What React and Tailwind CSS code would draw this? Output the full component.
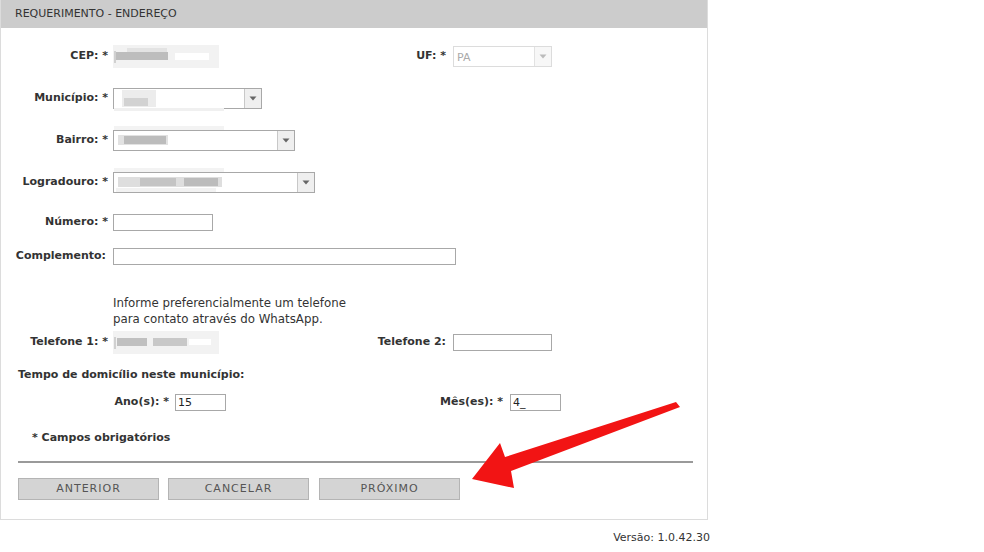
import React from "react";

const font = { fontFamily: '"DejaVu Sans", Verdana, sans-serif' };

// pixelated blur used where the original screenshot hides personal data
const Mosaic = ({ blocks }) => (
  <div className="relative w-full h-full">
    {blocks.map((b, i) => (
      <div
        key={i}
        className="absolute"
        style={{ left: b[0], top: b[1], width: b[2], height: b[3], background: b[4] }}
      />
    ))}
  </div>
);

const Caret = ({ light }) => (
  <svg width="8" height="5" viewBox="0 0 8 5">
    <path d="M0.5 0.5 L7.5 0.5 L4 4.5 Z" fill={light ? "#bbb" : "#666"} />
  </svg>
);

const SelectBox = ({ width, children, disabled }) => (
  <div
    className={`flex h-[21px] border ${disabled ? "border-[#dcdcdc]" : "border-[#a8a8a8]"} bg-white`}
    style={{ width }}
  >
    <div className="flex-1 relative overflow-visible">{children}</div>
    <div
      className={`w-[17px] flex items-center justify-center border-l ${
        disabled ? "border-[#e2e2e2] bg-[#f7f7f7]" : "border-[#c8c8c8] bg-[#efefef]"
      }`}
    >
      <Caret light={disabled} />
    </div>
  </div>
);

const TextBox = ({ width, value }) => (
  <div
    className="h-[17px] border border-[#a8a8a8] bg-white text-[11px] leading-[15px] pl-[2px] text-[#222]"
    style={{ width }}
  >
    {value}
  </div>
);

const Label = ({ children, w }) => (
  <div className="text-right font-bold text-[11px] text-[#333] shrink-0 whitespace-nowrap" style={{ width: w }}>
    {children}
  </div>
);

// left label column ends at x=107, field at x=112; optional second column label ends at x=445
const FieldRow = ({ label, mt, h = 22, children, rightLabel, rightField }) => (
  <div className="flex items-center" style={{ marginTop: mt, height: h }}>
    <Label w={107}>{label}</Label>
    <div className="ml-[5px] relative shrink-0" style={{ width: 248 }}>{children}</div>
    {rightLabel && (
      <>
        <Label w={85}>{rightLabel}</Label>
        <div className="ml-[7px]">{rightField}</div>
      </>
    )}
  </div>
);

const Button = ({ children, className = "" }) => (
  <button
    className={`w-[141px] h-[22px] bg-[#d4d4d4] border border-[#b4b4b4] text-[11px] tracking-[1px] text-[#555] ${className}`}
  >
    {children}
  </button>
);

export default function App() {
  return (
    <div className="relative w-[984px] h-[552px] bg-white overflow-hidden" style={font}>
      <div className="w-[708px] border-l border-r border-b border-[#dcdcdc] pb-[19px]">
        <div className="h-[28px] bg-[#cccccc] flex items-center pl-[14px] text-[11px] text-[#333]">
          REQUERIMENTO - ENDEREÇO
        </div>

        <FieldRow
          label="CEP: *"
          mt={17}
          rightLabel="UF: *"
          rightField={
            <SelectBox width={99} disabled>
              <span className="absolute left-[3px] top-[3px] text-[11px] text-[#aaa]">PA</span>
            </SelectBox>
          }
        >
          <div className="w-[106px] h-[23px]">
            <Mosaic
              blocks={[
                [0, 0, 106, 23, "#f2f2f2"],
                [3, 7, 52, 8, "#bdbdbd"],
                [14, 3, 40, 4, "#e3e3e3"],
                [62, 8, 34, 7, "#ffffff"],
                [1, 6, 2, 12, "#d0d0d0"],
              ]}
            />
          </div>
        </FieldRow>

        <FieldRow label="Município: *" mt={20}>
          <SelectBox width={149}>
            <Mosaic
              blocks={[
                [8, 1, 34, 17, "#ececec"],
                [10, 9, 24, 8, "#d2d2d2"],
                [0, 19, 110, 3, "#f0f0f0"],
              ]}
            />
          </SelectBox>
        </FieldRow>

        <FieldRow label="Bairro: *" mt={20}>
          <SelectBox width={182}>
            <Mosaic
              blocks={[
                [0, -5, 110, 4, "#f3f3f3"],
                [4, 4, 50, 10, "#e2e2e2"],
                [10, 5, 42, 8, "#bcbcbc"],
              ]}
            />
          </SelectBox>
        </FieldRow>

        <FieldRow label="Logradouro: *" mt={20}>
          <SelectBox width={202}>
            <Mosaic
              blocks={[
                [0, -5, 110, 4, "#f3f3f3"],
                [4, 4, 104, 10, "#dedede"],
                [26, 5, 36, 8, "#c4c4c4"],
                [70, 5, 34, 8, "#bcbcbc"],
                [2, 15, 100, 4, "#f2f2f2"],
              ]}
            />
          </SelectBox>
        </FieldRow>

        <FieldRow label="Número: *" mt={18}>
          <TextBox width={100} />
        </FieldRow>

        <div className="flex items-center h-[22px] mt-[12px]">
          <Label w={105}>Complemento:</Label>
          <div className="ml-[7px]">
            <TextBox width={343} />
          </div>
        </div>

        <div className="ml-[112px] mt-[28px] text-[11.8px] leading-[16px] text-[#333]">
          <div>Informe preferencialmente um telefone</div>
          <div>para contato através do WhatsApp.</div>
        </div>

        <FieldRow
          label="Telefone 1: *"
          mt={4}
          rightLabel="Telefone 2:"
          rightField={<TextBox width={99} />}
        >
          <div className="w-[106px] h-[23px]">
            <Mosaic
              blocks={[
                [0, 0, 106, 23, "#f2f2f2"],
                [4, 7, 30, 8, "#c0c0c0"],
                [40, 7, 34, 8, "#c8c8c8"],
                [76, 8, 22, 6, "#ffffff"],
                [1, 6, 2, 12, "#d0d0d0"],
              ]}
            />
          </div>
        </FieldRow>

        <div className="ml-[17px] mt-[14px] h-[16px] leading-[16px] font-bold text-[11px] text-[#333]">
          Tempo de domicílio neste município:
        </div>

        <div className="flex items-center h-[22px] mt-[8px]">
          <Label w={168}>Ano(s): *</Label>
          <div className="ml-[6px]">
            <TextBox width={51} value="15" />
          </div>
          <Label w={277}>Mês(es): *</Label>
          <div className="ml-[7px]">
            <TextBox width={51} value="4_" />
          </div>
        </div>

        <div className="ml-[31px] mt-[17px] h-[16px] leading-[16px] font-bold text-[11px] text-[#333]">
          * Campos obrigatórios
        </div>

        <div className="ml-[17px] mt-[15px] w-[675px] h-[2px] bg-[#9a9a9a]" />

        <div className="flex items-start ml-[17px] mt-[15px] gap-[9px]">
          <Button>ANTERIOR</Button>
          <Button>CANCELAR</Button>
          <Button className="ml-[1px]">PRÓXIMO</Button>
        </div>
      </div>

      <div className="w-[710px] text-right text-[11px] text-[#333] mt-[10px]">Versão: 1.0.42.30</div>

      <svg className="absolute left-0 top-0 pointer-events-none" width="984" height="552" viewBox="0 0 984 552">
        <polygon
          points="676,402 680,407 511,471 514,488 472,479 500,443 505,457"
          fill="#f21414"
        />
      </svg>
    </div>
  );
}
